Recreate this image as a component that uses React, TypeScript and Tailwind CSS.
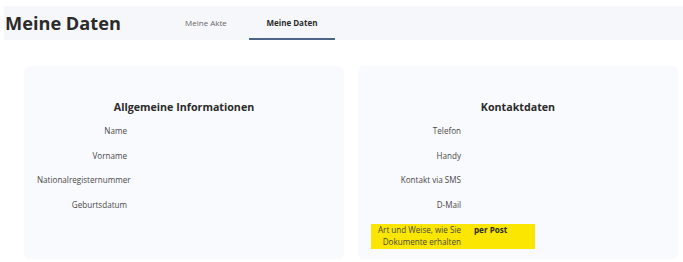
const allgemein = ["Name", "Vorname", "Nationalregisternummer", "Geburtsdatum"];
const kontakt = ["Telefon", "Handy", "Kontakt via SMS", "D-Mail"];

const Row = ({ label, value, highlight }: { label: React.ReactNode; value?: string; highlight?: boolean }) => (
  <div
    className={
      "ml-[13px] flex w-[164px] leading-[12px] " + (highlight ? "bg-[#fae600] py-[0.5px]" : "")
    }
  >
    <div className="w-[90px] shrink-0 text-right text-[#484848]">{label}</div>
    {value && <div className="pl-[13px] font-bold text-[#2b2b2b]">{value}</div>}
  </div>
);

const Card = ({ title, children }: { title: string; children: React.ReactNode }) => (
  <div className="h-[193px] rounded-[6px] bg-[#f9fafd] pt-[34px]">
    <h2 className="text-center text-[10.7px] font-bold leading-[14px] text-[#2b2b2b]">{title}</h2>
    <div className="mt-[11px] flex flex-col gap-[12.7px] text-[8.1px]">{children}</div>
  </div>
);

export default function App() {
  return (
    <div className="h-[262px] w-[683px] bg-white font-['Open_Sans',sans-serif]">
      <div className="ml-[4px] mt-[6px] flex h-[34px] items-stretch bg-[#f6f7fb]">
        <h1 className="mt-[1px] flex items-center pl-[1px] text-[18.2px] font-bold leading-none text-[#2b2b2b]">
          Meine Daten
        </h1>
        <nav className="ml-[46px] flex gap-[4px] text-[8px]">
          <div className="flex w-[78px] items-center justify-center text-[#666]">Meine Akte</div>
          <div className="flex w-[86px] items-center justify-center border-b-2 border-[#4b6584] pt-[2px] font-bold text-[#2b2b2b]">
            Meine Daten
          </div>
        </nav>
      </div>
      <div className="mt-[26px] grid grid-cols-2 gap-[14px] pl-[24px] pr-[5px]">
        <Card title="Allgemeine Informationen">
          {allgemein.map((l) => (
            <Row key={l} label={l} />
          ))}
        </Card>
        <Card title="Kontaktdaten">
          {kontakt.map((l) => (
            <Row key={l} label={l} />
          ))}
          <Row
            highlight
            label={
              <>
                Art und Weise, wie Sie
                <br />
                Dokumente erhalten
              </>
            }
            value="per Post"
          />
        </Card>
      </div>
    </div>
  );
}
